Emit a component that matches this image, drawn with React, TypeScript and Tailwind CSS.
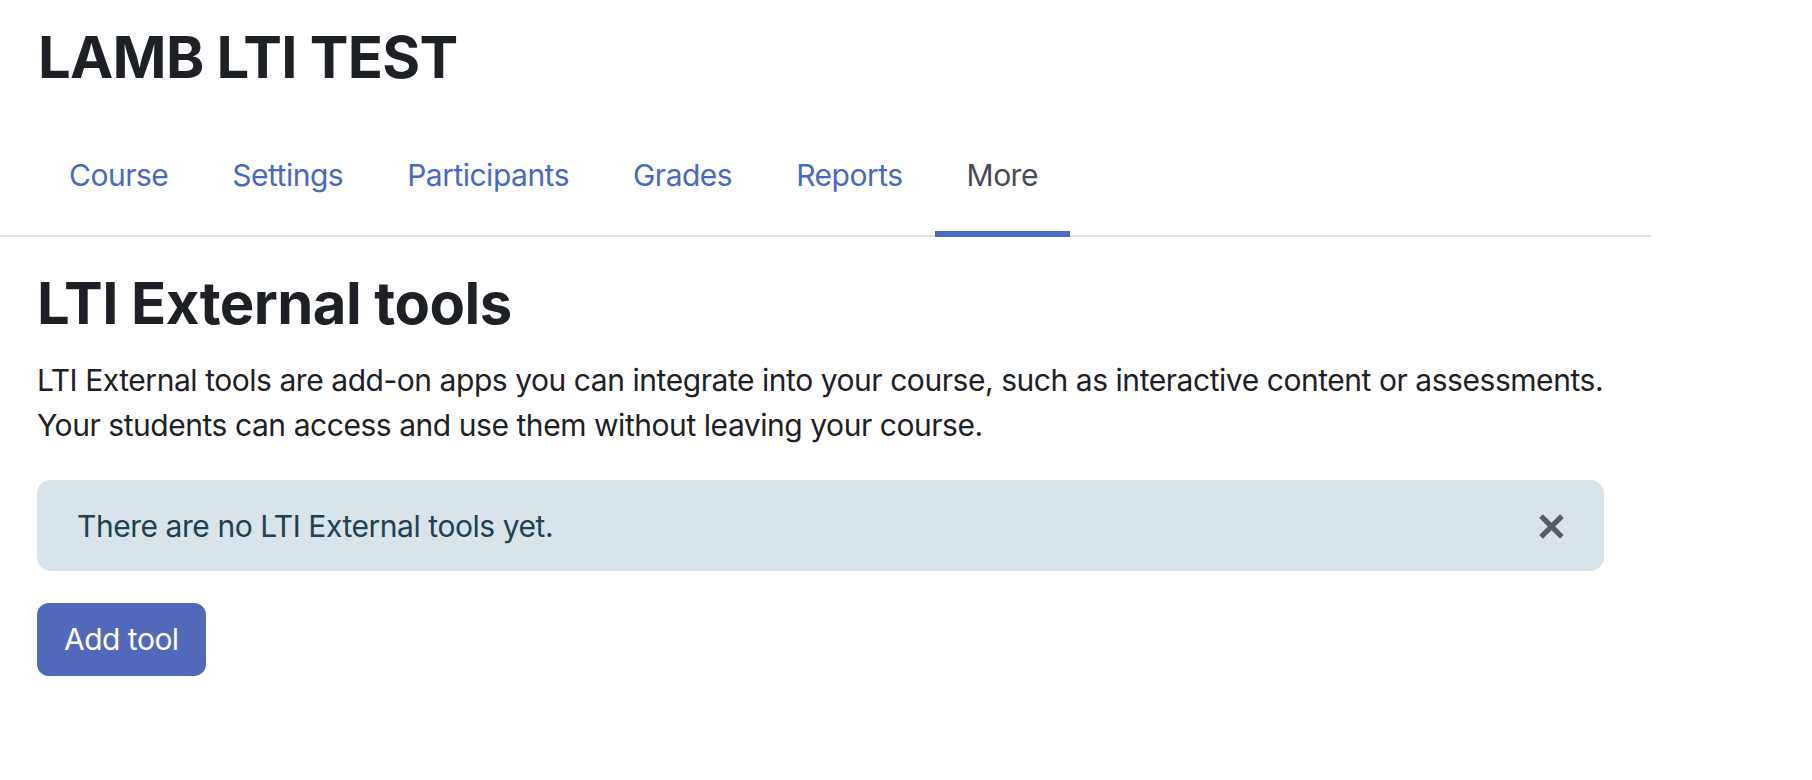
import React from "react";

const navItems = ["Course", "Settings", "Participants", "Grades", "Reports", "More"];

export default function App() {
  return (
    <div className="w-[1651px] bg-white font-['Inter',sans-serif] text-[#1d2125]">
      <h1 className="px-[38px] pt-[24px] text-[58px] font-bold leading-[67px] tracking-[-0.75px]">LAMB LTI TEST</h1>
      <nav className="mt-[26px] flex border-b-2 border-[#dee2e6] pl-[37px]">
        {navItems.map((item) => {
          const active = item === "More";
          return (
            <a
              key={item}
              className={
                active
                  ? "-mb-[2px] flex h-[120px] items-center border-b-[6px] border-[#4f6bbb] px-[32px] pt-[2px] text-[30px] leading-[45px] tracking-[-0.5px] text-[#474b50]"
                  : "-mb-[2px] flex h-[120px] items-center border-b-[6px] border-transparent px-[32px] pt-[2px] text-[30px] leading-[45px] tracking-[-0.5px] text-[#4a69bd]"
              }
            >
              {item}
            </a>
          );
        })}
      </nav>
      <div className="pl-[37px] pr-[47px]">
        <h2 className="mt-[33px] text-[58px] font-bold leading-[67px] tracking-[-0.55px]">LTI External tools</h2>
        <p className="mt-[21px] whitespace-nowrap text-[30px] leading-[45px] tracking-[-0.45px]">
          LTI External tools are add-on apps you can integrate into your course, such as interactive content or assessments.
          <br />
          Your students can access and use them without leaving your course.
        </p>
        <div className="mt-[32px] flex h-[91px] items-center justify-between rounded-[14px] bg-[#d8e4ea] pl-[40px] pr-[40px] text-[30px] leading-[45px] tracking-[-0.45px] text-[#22404f]">
          <span className="pt-[2px]">There are no LTI External tools yet.</span>
          <svg width="25" height="25" viewBox="0 0 24 24" className="mt-[2px]">
            <path d="M2 2 L22 22 M22 2 L2 22" stroke="#565c61" strokeWidth="5" strokeLinecap="butt" />
          </svg>
        </div>
        <button className="mt-[32px] h-[73px] rounded-[12px] bg-[#5069b9] px-[27px] text-[30px] leading-[45px] tracking-[-0.5px] text-white">
          Add tool
        </button>
      </div>
    </div>
  );
}
